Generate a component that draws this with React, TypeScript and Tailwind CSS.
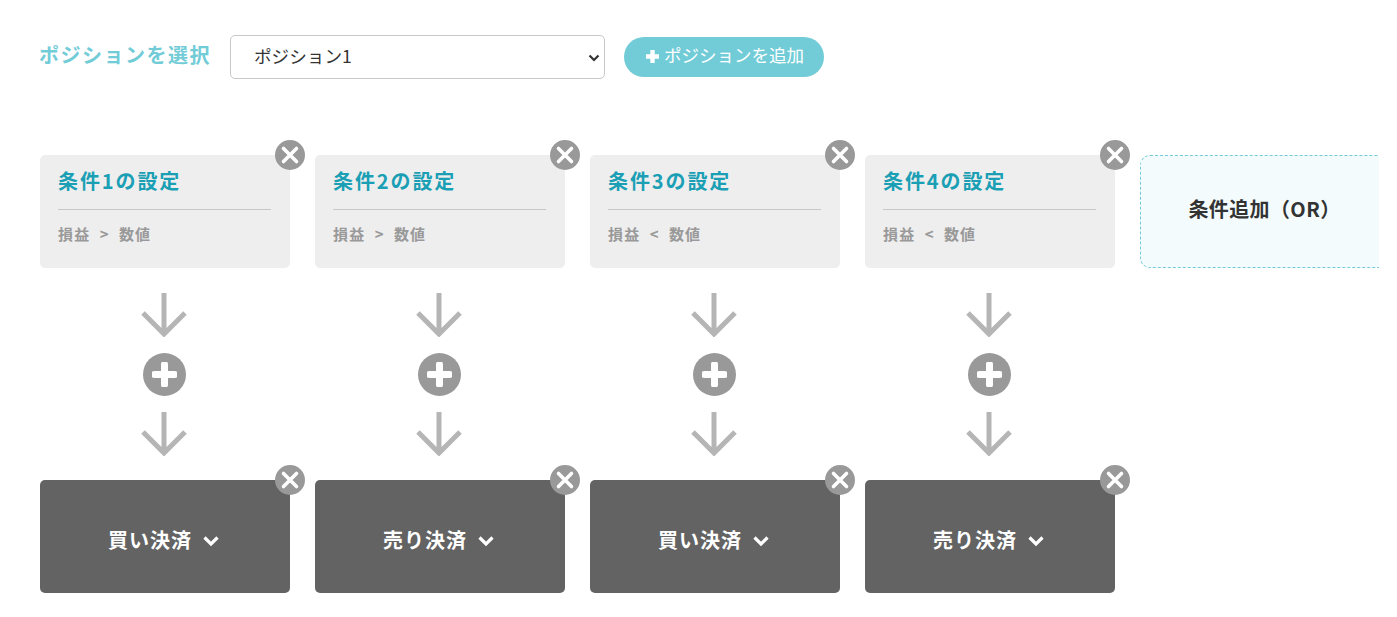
const font = "font-['Noto_Sans_CJK_JP','Noto_Sans',sans-serif]";

function CloseBtn() {
  return (
    <span className="absolute -right-[15px] -top-[15px] flex h-[30px] w-[30px] items-center justify-center rounded-full bg-[#999999]">
      <svg width="20" height="20" viewBox="0 0 20 20">
        <path d="M3.5 3.5 L16.5 16.5 M16.5 3.5 L3.5 16.5" stroke="#fff" strokeWidth="3.6" strokeLinecap="round" />
      </svg>
    </span>
  );
}

function Arrow() {
  return (
    <svg width="48" height="44" viewBox="0 0 48 44" className="block">
      <path d="M24 0 V41 M3 20 L24 41 L45 20" fill="none" stroke="#b5b5b5" strokeWidth="5" />
    </svg>
  );
}

function Plus() {
  return (
    <span className="flex h-[43px] w-[43px] items-center justify-center rounded-full bg-[#999999]">
      <svg width="25" height="25" viewBox="0 0 25 25">
        <path d="M12.5 2.5 V22.5 M2.5 12.5 H22.5" stroke="#fff" strokeWidth="7" strokeLinecap="round" />
      </svg>
    </span>
  );
}

const columns = [
  { n: 1, op: ">", result: "買い決済" },
  { n: 2, op: ">", result: "売り決済" },
  { n: 3, op: "<", result: "買い決済" },
  { n: 4, op: "<", result: "売り決済" },
];

export default function App() {
  return (
    <div className={`${font} h-[617px] w-[1379px] overflow-hidden bg-white pl-[40px] pt-[35px] text-[#333]`}>
      <div className="flex h-[44px] items-center">
        <span className="-ml-[1px] w-[191px] pb-[4px] text-[20px] leading-[40px] font-bold tracking-[1.5px] text-[#72ccd7]">ポジションを選択</span>
        <div className="relative h-[44px] w-[375px] rounded-[5px] border border-[#c8c8c8] bg-white pl-[23px] text-[17.6px] leading-[39px] text-[#333]">
          ポジション1
          <svg width="12" height="8" viewBox="0 0 12 8" className="absolute right-[4px] top-[18px]">
            <path d="M1.5 1.5 L6 6 L10.5 1.5" fill="none" stroke="#333" strokeWidth="2.2" />
          </svg>
        </div>
        <span className="ml-[19px] flex h-[40px] w-[200px] items-center justify-center gap-[4px] rounded-full bg-[#72ccd7] pl-[1px] text-[17.5px] leading-[36px] text-white">
          <svg width="15" height="15" viewBox="0 0 15 15" className="mb-[1px]">
            <path d="M7.5 1 V14 M1 7.5 H14" stroke="#fff" strokeWidth="4.4" />
          </svg>
          <span className="pb-[4px]">ポジションを追加</span>
        </span>
      </div>

      <div className="mt-[76px] flex w-[1400px] gap-[25px]">
        {columns.map((c) => (
          <div key={c.n} className="flex w-[250px] flex-col items-center">
            <div className="relative h-[113px] w-full rounded-[5px] bg-[#eeeeee] pl-[18px] pr-[19px]">
              <CloseBtn />
              <div className="h-[55px] border-b border-[#c8c8c8] pt-[9px] text-[20px] leading-[33px] font-bold tracking-[1.9px] text-[#1a9fb5]">
                条件{c.n}の設定
              </div>
              <div className="pt-[12px] text-[15px] leading-[24px] font-bold tracking-[1.2px] text-[#999999]">
                損益 &nbsp;{c.op}&nbsp; 数値
              </div>
            </div>
            <div className="mr-[2px] mt-[25px]"><Arrow /></div>
            <div className="mr-[2px] mt-[16px]"><Plus /></div>
            <div className="mr-[2px] mt-[16px]"><Arrow /></div>
            <div className="relative mt-[24px] flex h-[113px] w-full items-center justify-center gap-[10px] rounded-[5px] bg-[#636363] pr-[2px] pt-[2px] text-[20px] font-bold tracking-[1px] text-white">
              <CloseBtn />
              <span className="pt-[4px]">{c.result}</span>
              <svg width="18" height="12" viewBox="0 0 18 12" className="mt-[6px]">
                <path d="M2.5 2.5 L9 9 L15.5 2.5" fill="none" stroke="#fff" strokeWidth="3.2" />
              </svg>
            </div>
          </div>
        ))}
        <div className="flex h-[113px] w-[250px] items-center justify-center rounded-[10px] border border-dashed border-[#72ccd7] bg-[#f3fbfd] pb-[5px] pr-[1px] text-[20px] font-bold tracking-[0.4px] text-[#333]">
          条件追加（OR）
        </div>
      </div>
    </div>
  );
}
